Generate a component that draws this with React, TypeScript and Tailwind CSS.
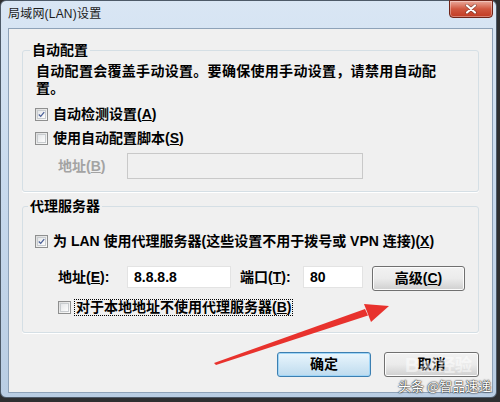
import React from "react";

const FONT = {
  fontFamily: '"Liberation Sans", "Noto Sans CJK SC", sans-serif',
};

function CheckBox({ checked }: { checked?: boolean }) {
  return (
    <div className="w-[13px] h-[13px] shrink-0 border border-[#8e8f8f] bg-gradient-to-br from-[#dcdcdc] to-[#fbfbfb] p-[1px]">
      <div className="w-full h-full border border-[#c8cccf] bg-gradient-to-br from-[#e4e6e8] to-[#fdfdfd] flex items-center justify-center">
        {checked && (
          <svg width="9" height="9" viewBox="0 0 9 9">
            <path d="M1 4.5 L3.5 7 L8 1.5" fill="none" stroke="#4a5f97" strokeWidth="1.6" />
          </svg>
        )}
      </div>
    </div>
  );
}

function Btn({ children, focused }: { children: React.ReactNode; focused?: boolean }) {
  return (
    <div
      className={
        "h-[25px] rounded-[3px] border flex items-center justify-center text-[14px] font-semibold text-black " +
        (focused
          ? "border-[#3c7fb1] bg-gradient-to-b from-[#eaf6fd] to-[#bedbee] shadow-[inset_0_0_0_1px_#9fd5f7]"
          : "border-[#707070] bg-gradient-to-b from-[#f2f2f2] via-[#ebebeb] to-[#cfcfcf] shadow-[inset_0_0_0_1px_#fcfcfc]")
      }
    >
      {children}
    </div>
  );
}

export default function App() {
  return (
    <div className="w-[500px] h-[402px] bg-[#2e2f31] overflow-hidden relative" style={FONT}>
      {/* window */}
      <div className="w-[497px] h-[398px] rounded-[6px] border border-[#4d5a68] bg-gradient-to-b from-[#d9e6f4] via-[#c7d9ed] to-[#b9cde3] flex flex-col">
        {/* title bar */}
        <div className="h-[27px] flex items-start justify-between pl-[7px] pr-[3px]">
          <div className="mt-[5px] text-[12px] leading-[16px] text-[#1b1b1b] tracking-[0.2px]">
            局域网(LAN)设置
          </div>
          <div className="w-[44px] h-[18px] -mt-[1px] rounded-b-[4px] border border-[#6f2418] bg-gradient-to-b from-[#e9a99b] via-[#d0573f] to-[#c13a22] flex items-center justify-center shadow-[inset_0_0_0_1px_rgba(255,255,255,0.35)]">
            <svg width="12" height="10" viewBox="0 0 12 10">
              <path d="M2 1.5 L10 8.5 M10 1.5 L2 8.5" stroke="#3a1a14" strokeWidth="3.4" strokeLinecap="round" opacity="0.5" />
              <path d="M2 1.5 L10 8.5 M10 1.5 L2 8.5" stroke="#ffffff" strokeWidth="2.2" strokeLinecap="round" />
            </svg>
          </div>
        </div>

        {/* client area */}
        <div className="ml-[7px] w-[485px] h-[365px] border border-[#8ea2b8] bg-[#f0f0f0] flex flex-col pt-[13px] px-[13px]">
          {/* group 1 */}
          <fieldset className="border border-[#d5dfe5] rounded-[3px] pl-[12px] pr-[10px] pb-[12px] shadow-[0_1px_0_#ffffff]">
            <legend className="-ml-[5px] px-[2px] text-[14px] leading-[16px] font-semibold text-black">自动配置</legend>
            <div className="mt-[5px] ml-[1px] text-[14px] leading-[17px] font-semibold text-black tracking-[0.3px] whitespace-nowrap">
              自动配置会覆盖手动设置。要确保使用手动设置，请禁用自动配
              <br />
              置。
            </div>
            <div className="mt-[9px] h-[17px] flex items-center gap-[5px]">
              <CheckBox checked />
              <span className="text-[14px] leading-[17px] font-semibold text-black">
                自动检测设置(<span className="underline">A</span>)
              </span>
            </div>
            <div className="mt-[7px] h-[17px] flex items-center gap-[5px]">
              <CheckBox />
              <span className="text-[14px] leading-[17px] font-semibold text-black">
                使用自动配置脚本(<span className="underline">S</span>)
              </span>
            </div>
            <div className="mt-[6px] flex items-center">
              <span className="ml-[23px] w-[69px] text-[14px] leading-[17px] font-semibold text-[#a3a3a3]">
                地址(<span className="underline">B</span>)
              </span>
              <div className="w-[236px] h-[26px] border border-[#c9c9c9] bg-[#f0f0f0]" />
            </div>
          </fieldset>

          {/* group 2 */}
          <fieldset className="mt-[6px] border border-[#d5dfe5] rounded-[3px] pl-[12px] pr-[10px] pb-[16px] shadow-[0_1px_0_#ffffff]">
            <legend className="-ml-[7px] px-[2px] text-[14px] leading-[16px] font-semibold text-black">代理服务器</legend>
            <div className="mt-[19px] h-[17px] flex items-center gap-[5px]">
              <CheckBox checked />
              <span className="text-[14px] leading-[17px] font-semibold text-black whitespace-nowrap">
                为 LAN 使用代理服务器(这些设置不用于拨号或 VPN 连接)(<span className="underline">X</span>)
              </span>
            </div>
            <div className="mt-[16px] h-[25px] flex items-start">
              <span className="ml-[23px] w-[69px] mt-[3px] text-[14px] leading-[17px] font-semibold text-black whitespace-nowrap">
                地址(<span className="underline">E</span>):
              </span>
              <div className="w-[104px] h-[22px] border border-[#e3e3e3] bg-white flex items-center pl-[6px] text-[14px] font-semibold text-black">
                8.8.8.8
              </div>
              <span className="ml-[9px] w-[63px] mt-[3px] text-[14px] leading-[17px] font-semibold text-black whitespace-nowrap">
                端口(<span className="underline">T</span>):
              </span>
              <div className="w-[60px] h-[22px] border border-[#e3e3e3] bg-white flex items-center pl-[6px] text-[14px] font-semibold text-black">
                80
              </div>
              <div className="ml-[9px] w-[93px]">
                <Btn>
                  高级(<span className="underline">C</span>)
                </Btn>
              </div>
            </div>
            <div className="mt-[8px] ml-[23px] h-[17px] flex items-center gap-[3px]">
              <CheckBox />
              <span className="border border-dotted border-black px-[1px] text-[14px] leading-[15px] font-semibold text-black">
                对于本地地址不使用代理服务器(<span className="underline">B</span>)
              </span>
            </div>
          </fieldset>

          {/* bottom buttons */}
          <div className="mt-[19px] flex justify-end gap-[13px]">
            <div className="w-[94px]">
              <Btn focused>确定</Btn>
            </div>
            <div className="w-[95px]">
              <Btn>取消</Btn>
            </div>
          </div>
        </div>
      </div>

      {/* red arrow annotation */}
      <svg className="absolute left-0 top-0 pointer-events-none" width="500" height="402" viewBox="0 0 500 402">
        <polygon points="214,363 216,365 368,315.5 365,309" fill="#e8322d" />
        <polygon points="389,306 364,304 371,322" fill="#e8322d" />
      </svg>

      {/* Baidu watermark */}
      <div className="absolute left-[405px] top-[355px] flex items-end text-[20px] leading-[21px] font-bold text-white opacity-50 pointer-events-none">
        <span>Bai</span>
        <span className="text-[17px] ml-[2px]">经验</span>
      </div>

      {/* toutiao watermark */}
      <div
        className="absolute left-[398px] top-[378px] text-[13px] leading-[16px] text-white pointer-events-none whitespace-nowrap"
        style={{ textShadow: "0 0 2px #000, 0 0 1px #000", fontFamily: '"Noto Sans CJK SC", sans-serif' }}
      >
        头条 @智品速递
      </div>
    </div>
  );
}
